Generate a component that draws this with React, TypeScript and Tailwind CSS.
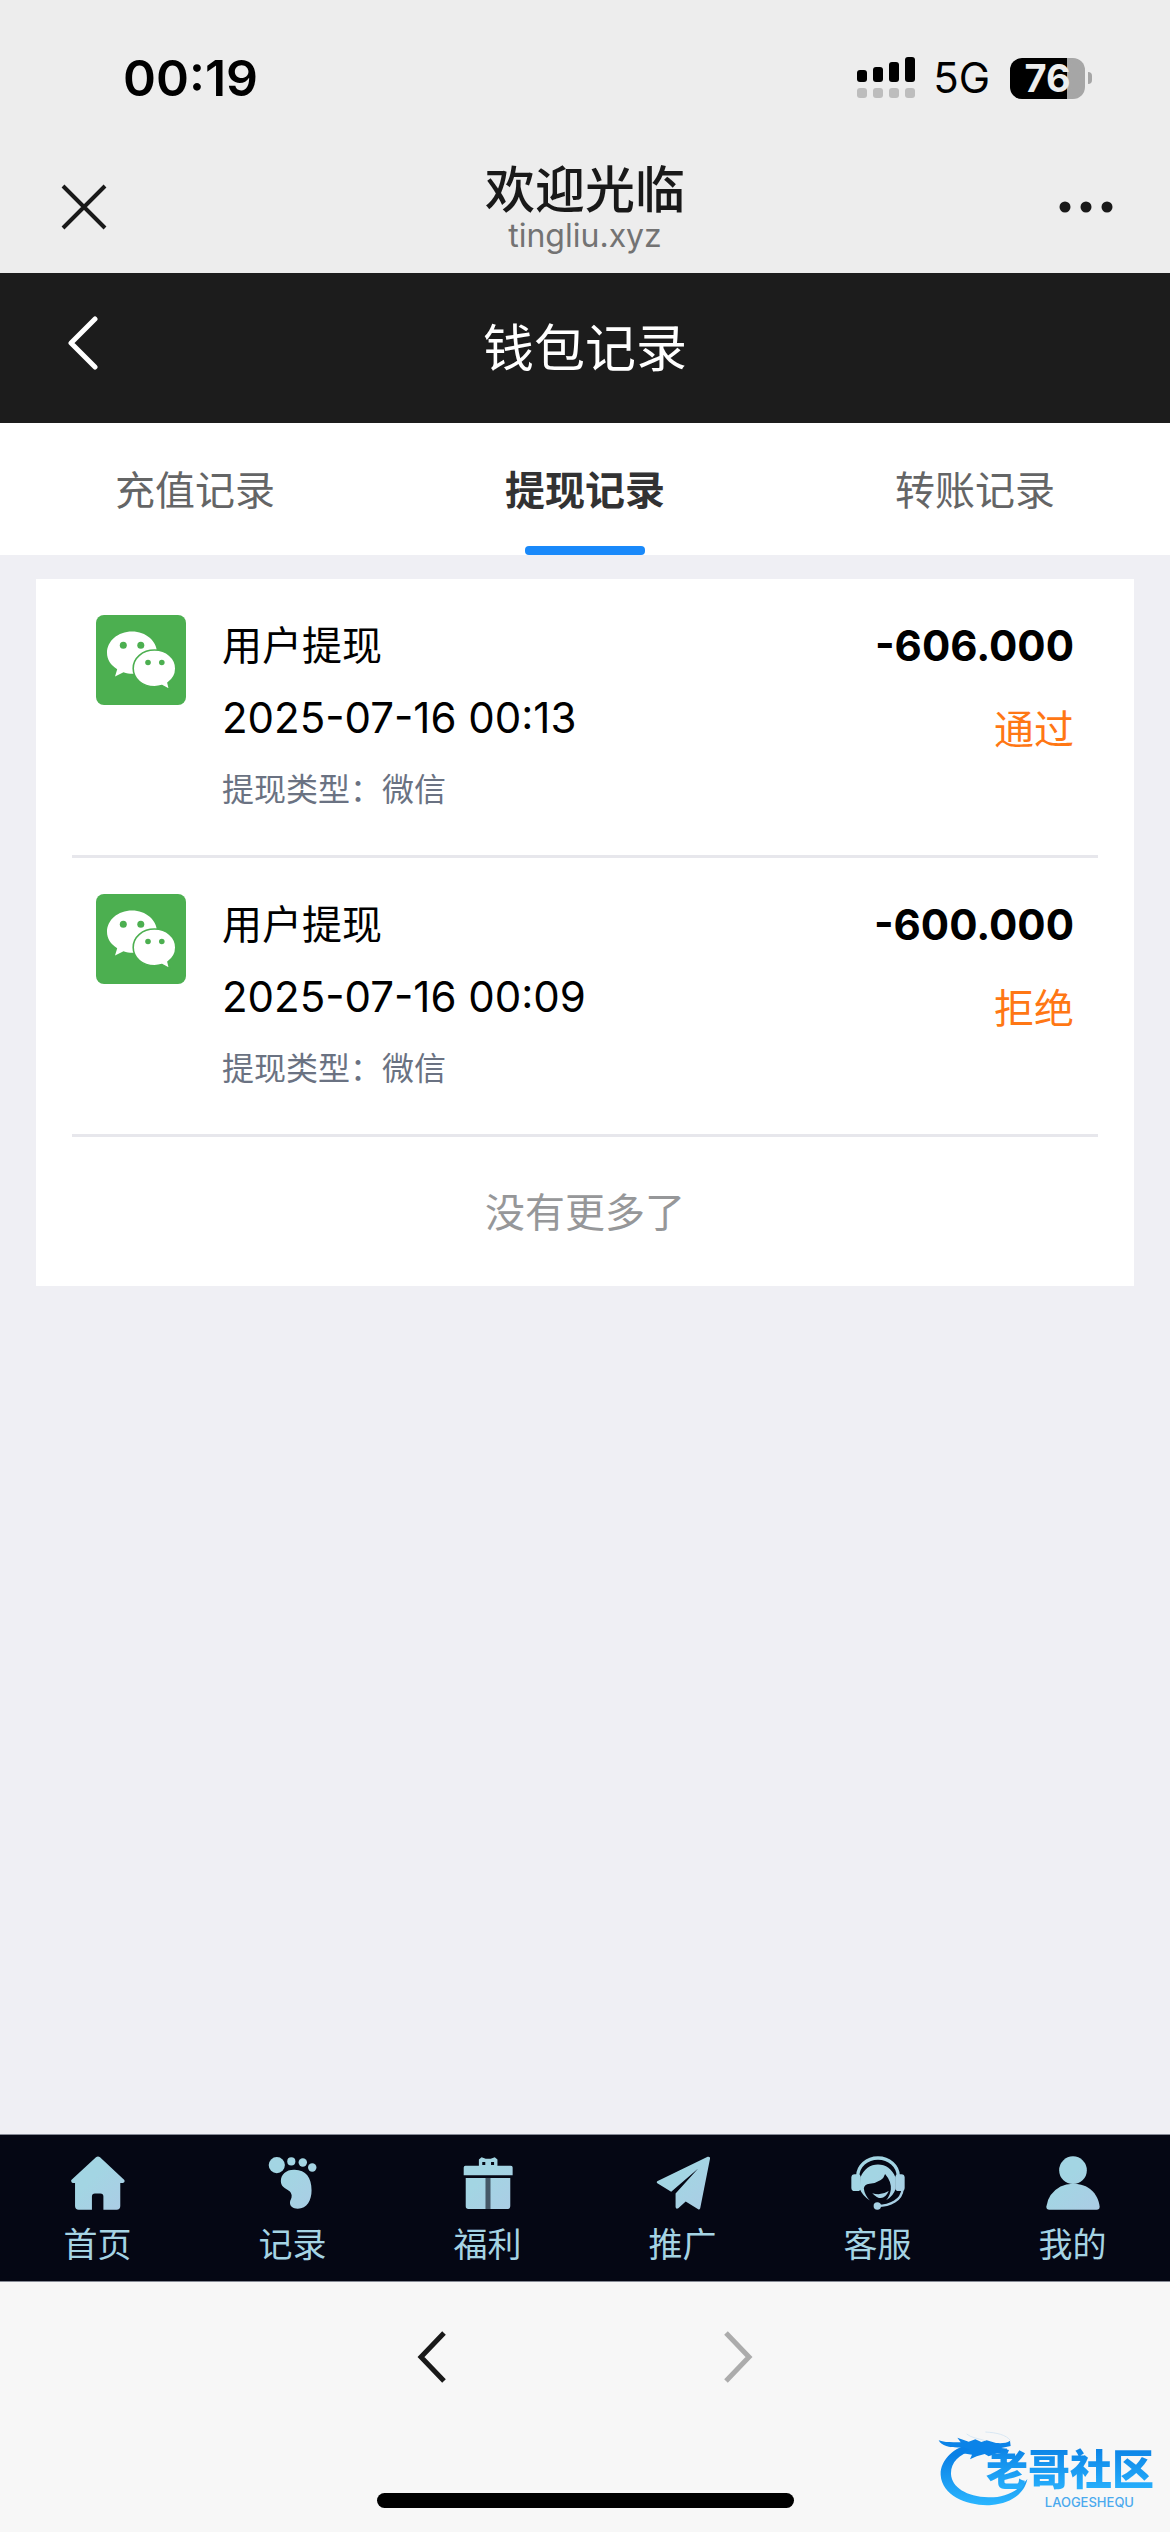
import { useState } from 'react';
import type { ReactNode } from 'react';

interface WithdrawRecord {
  id: number;
  title: string;
  time: string;
  method: string;
  amount: string;
  status: string;
}

const TABS = [
  { key: 'recharge', label: '充值记录' },
  { key: 'withdraw', label: '提现记录' },
  { key: 'transfer', label: '转账记录' },
];

const RECORDS: Record<string, WithdrawRecord[]> = {
  recharge: [],
  withdraw: [
    { id: 1, title: '用户提现', time: '2025-07-16 00:13', method: '微信', amount: '-606.000', status: '通过' },
    { id: 2, title: '用户提现', time: '2025-07-16 00:09', method: '微信', amount: '-600.000', status: '拒绝' },
  ],
  transfer: [],
};

function StatusBar() {
  return (
    <div className="flex h-[156px] items-center justify-between pl-[123px] pr-[78px] text-black">
      <span className="text-[50px] leading-none font-semibold">00:19</span>
      <div className="flex items-center gap-5">
        <div className="flex items-center gap-4">
          <svg className="h-[42px] w-[60px]" viewBox="0 0 60 42" aria-label="信号">
            <rect x="0" y="13" width="10" height="12" rx="3" />
            <rect x="16" y="10" width="10" height="15" rx="3" />
            <rect x="32" y="5" width="10" height="20" rx="3" />
            <rect x="48" y="0" width="10" height="25" rx="3" />
            {[0, 16, 32, 48].map((x) => (
              <rect key={x} x={x} y="31" width="10" height="10" rx="3" fill="#bdbdbd" />
            ))}
          </svg>
          <span className="text-[42px] leading-none">5G</span>
        </div>
        <div className="flex items-center gap-[3px]">
          <div className="flex h-[41px] w-[75px] items-center justify-center rounded-xl bg-linear-to-r from-black from-76% to-[#a6a6a6] to-76% text-[38px] leading-none font-bold text-[#ededed]">
            76
          </div>
          <div className="h-3 w-1 rounded-r-full bg-[#a6a6a6]" />
        </div>
      </div>
    </div>
  );
}

function BrowserBar() {
  return (
    <div className="flex h-[117px] items-start justify-between px-[57px] text-[#191919]">
      <button type="button" aria-label="关闭" className="pt-[26px]">
        <svg className="h-12 w-[54px]" viewBox="0 0 54 48" fill="none" stroke="currentColor" strokeWidth="4">
          <path d="M6 4 48 46M48 4 6 46" />
        </svg>
      </button>
      <div className="flex flex-col items-center">
        <span className="text-[50px] leading-[68px] font-medium">欢迎光临</span>
        <span className="text-[32px] leading-6 text-[#737373]">tingliu.xyz</span>
      </div>
      <button type="button" aria-label="更多" className="pt-[26px]">
        <svg className="h-12 w-[54px]" viewBox="0 0 54 48" fill="currentColor">
          <circle cx="6" cy="25" r="5.500" />
          <circle cx="27" cy="25" r="5.500" />
          <circle cx="48" cy="25" r="5.500" />
        </svg>
      </button>
    </div>
  );
}

function WechatIcon() {
  return (
    <svg className="size-[90px] shrink-0 rounded-lg" viewBox="0 0 90 90" aria-label="微信">
      <rect width="90" height="90" fill="#4caf50" />
      <path fill="#fff" d="M36 16.5C22 16.5 11 26 11 37.8c0 6.600 3.500 12.500 10.200 16.400L19 61.500l8.500-4.300c3 1 6 1.600 9 1.600 14 0 24.500-9.500 24.500-21S50 16.500 36 16.500z" />
      <path fill="#fff" stroke="#4caf50" strokeWidth="1.600" d="M58.500 35C46.500 35 37.200 43 37.200 53.400S46.500 71.800 58.500 71.800c2.800 0 5-.4 7.500-1.200l7.600 4-1.600-6.800c5-3.600 7.800-8.700 7.800-14.400C79.800 43 70.500 35 58.500 35z" />
      <g fill="#4caf50">
        <circle cx="27.300" cy="30.300" r="3.500" />
        <circle cx="44.800" cy="30.300" r="3.500" />
        <circle cx="52" cy="47.500" r="2.800" />
        <circle cx="65.800" cy="47.500" r="2.800" />
      </g>
    </svg>
  );
}

function RecordItem({ record }: { record: WithdrawRecord }) {
  return (
    <li className="flex items-start border-b-[3px] border-[#e7e7ec] px-6 pt-9 pb-[35px] text-black">
      <WechatIcon />
      <div className="ml-9 flex flex-1 flex-col gap-3 pt-px leading-[60px]">
        <div className="text-[40px]">{record.title}</div>
        <div className="text-[42px]">{record.time}</div>
        <div className="text-[32px] text-gray-500">提现类型：{record.method}</div>
      </div>
      <div className="flex flex-col items-end gap-6 pt-px leading-[60px]">
        <div className="text-[42px] font-bold">{record.amount}</div>
        <div className="text-[40px] text-[#ff7714]">{record.status}</div>
      </div>
    </li>
  );
}

// bottom nav icons share one 160x160 grid
const NAV_ITEMS: { label: string; icon: ReactNode }[] = [
  {
    label: '首页',
    icon: (
      <path d="M74 4q6-5 12 0L158 71q3 7-4 9h-8v68q0 11-11 11H96v-39q0-9-9-9H71q-9 0-9 9v39H23q-11 0-11-11V80H5q-6-2-4-9z" />
    ),
  },
  {
    label: '记录',
    icon: (
      <>
        <circle cx="32" cy="27" r="24" />
        <circle cx="75" cy="16" r="12" />
        <circle cx="109" cy="19" r="12.500" />
        <circle cx="137" cy="34" r="12.500" />
        <path d="M85 41C60 40 44 55 44 74c0 26 30 22 32 42 1 10-5 14-5 22 0 12 9 18 23 18 28 0 41-26 41-54 0-38-17-60-50-61z" />
      </>
    ),
  },
  {
    label: '福利',
    icon: (
      <>
        <path fillRule="evenodd" d="M53 29V10l8-6 12 4h15l12-4 8 6v19h40q5 0 5 5v23H8V34q0-5 5-5zM63 18v9h9v-9zM89 18v9h9v-9z" />
        <path d="M14 65h59v92H22q-8 0-8-8zM87 65h59v84q0 8-8 8H87z" />
        <path d="M73 65h14v92H73z" opacity=".4" />
      </>
    ),
  },
  {
    label: '推广',
    icon: (
      <path d="M153 2q8-1 7 6l-29 147q-2 5-6 3L88 135l-22 20q-7 4-8-4v-40l67-74-80 69-41-25q-4-4 1-7z" />
    ),
  },
  {
    label: '客服',
    icon: (
      <>
        <path d="M20 60a60 54 0 0 1 120 0" fill="none" stroke="url(#navFill)" strokeWidth="10" />
        <path d="M28 64C37 38 58 25 80 25s43 13 52 39v34q-7 22-28 33 12-14 14-32 2-24-17-46-6 24-46 29-16 2-17 14 2 18 18 36Q34 118 26 98z" />
        <rect x="1" y="54" width="28" height="50" rx="10" />
        <rect x="131" y="54" width="28" height="50" rx="10" />
        <path d="M63 110q25 9 49-6-18 38-49 6z" />
        <path d="M78 148c40 0 72-18 75-50" fill="none" stroke="url(#navFill)" strokeWidth="7" />
        <circle cx="78" cy="148" r="11" />
      </>
    ),
  },
  {
    label: '我的',
    icon: (
      <>
        <circle cx="80" cy="42" r="41" />
        <path d="M80 82c46 0 74 28 79 68q0 9-9 9H10q-9 0-9-9 5-40 42-60 16-8 37-8z" />
      </>
    ),
  },
];

function BottomNav() {
  return (
    <nav className="grid grid-cols-6 border-y border-[#868a95] bg-[#050714] pt-[21px] pb-3.5 text-[#a5d4e4]">
      {NAV_ITEMS.map((item) => (
        <a key={item.label} href="#" className="flex flex-col items-center gap-[13px]">
          <svg className="size-[54px]" viewBox="0 0 160 160" fill="url(#navFill)" aria-hidden="true">
            <defs>
              <linearGradient id="navFill" gradientUnits="userSpaceOnUse" x1="0" y1="0" x2="160" y2="160">
                <stop offset="0.400" stopColor="#a3d5e3" />
                <stop offset="1" stopColor="#abcce5" />
              </linearGradient>
            </defs>
            {item.icon}
          </svg>
          <span className="text-[34px] leading-[44px]">{item.label}</span>
        </a>
      ))}
    </nav>
  );
}

function CommunityLogo() {
  return (
    <div className="absolute right-4 bottom-6 flex items-end">
      <svg className="h-[78px] w-[92px]" viewBox="94 90 276 234" aria-hidden="true">
        <defs>
          <linearGradient id="dragon" x1="0" y1="0" x2="0" y2="1">
            <stop offset="0.200" stopColor="#0a80e6" />
            <stop offset="1" stopColor="#2bb6ff" />
          </linearGradient>
        </defs>
        <path fill="url(#dragon)" d="M200 128C136 142 100 184 102 225c4 65 88 95 153 90 55-5 98-32 107-78-32 42-72 56-117 55-65-2-110-30-112-70-1-34 22-58 67-72z" />
        <path fill="#0b83e8" d="M96 121c22 8 44 5 66 6l-10-14 34 12 20-7 18 8 16-5 28 8c16 1 32 1 42-7l2 16-28 6 23 6-6 14-30-4-25 9-12-7-24 7-20 9 6-14-28-4 20-12-20-6c-26 2-62 0-72-21z" />
        <path fill="none" stroke="#c9dff2" strokeWidth="2" d="M180 102c14 12 38 14 56 20M236 96c34 2 62 8 76 26" />
      </svg>
      <div className="-ml-11 flex flex-col items-end">
        <span className="bg-linear-to-b from-[#0a7fe4] to-[#2bb6ff] bg-clip-text text-[42px] leading-[52px] font-black text-transparent">
          老哥社区
        </span>
        <span className="pr-5 text-[13px] leading-3 font-medium text-[#4aa9ee]">LAOGESHEQU</span>
      </div>
    </div>
  );
}

export default function App() {
  const [active, setActive] = useState('withdraw');
  const records = RECORDS[active];

  return (
    <div className="flex min-h-screen flex-col bg-[#efeff4] font-['Inter','Noto_Sans_CJK_SC',sans-serif]">
      <header className="bg-[#ededed]">
        <StatusBar />
        <BrowserBar />
      </header>

      <div className="grid h-[150px] grid-cols-[1fr_auto_1fr] items-center bg-[#1c1c1c] px-[60px] text-white">
        <button type="button" aria-label="返回" className="justify-self-start pb-2.5">
          <svg className="h-[54px] w-[42px]" viewBox="0 0 42 54" fill="none" stroke="currentColor" strokeWidth="5" strokeLinecap="round" strokeLinejoin="round">
            <path d="M35 3 11 27l24 24" />
          </svg>
        </button>
        <h1 className="text-[51px] leading-none">钱包记录</h1>
      </div>

      <div role="tablist" className="grid h-[132px] grid-cols-3 bg-white">
        {TABS.map((tab) => (
          <button
            key={tab.key}
            type="button"
            role="tab"
            aria-selected={tab.key === active}
            onClick={() => setActive(tab.key)}
            className={`relative pt-1 text-[40px] ${
              tab.key === active ? 'font-bold text-[#323233]' : 'text-[#646566]'
            }`}
          >
            {tab.label}
            {tab.key === active && (
              <span className="absolute bottom-0 left-1/2 h-[9px] w-[120px] -translate-x-1/2 rounded bg-[#1989fa]" />
            )}
          </button>
        ))}
      </div>

      <main className="flex-1 px-9 pt-6">
        <div className="bg-white px-9">
          <ul>
            {records.map((record) => (
              <RecordItem key={record.id} record={record} />
            ))}
          </ul>
          <p className="pt-[46px] pb-[43px] text-center text-[40px] leading-[60px] text-[#969799]">没有更多了</p>
        </div>
      </main>

      <BottomNav />

      <footer className="relative flex flex-col items-center bg-[#f7f7f7] pt-12 pb-6">
        <div className="flex gap-[276px]">
          <button type="button" aria-label="后退" className="text-[#191919]">
            <svg className="h-[54px] w-[30px]" viewBox="0 0 30 54" fill="none" stroke="currentColor" strokeWidth="5">
              <path d="M27 3 4 27l23 24" />
            </svg>
          </button>
          <button type="button" aria-label="前进" disabled className="text-[#acacac]">
            <svg className="h-[54px] w-[30px]" viewBox="0 0 30 54" fill="none" stroke="currentColor" strokeWidth="5">
              <path d="M3 3l23 24L3 51" />
            </svg>
          </button>
        </div>
        <div className="mt-[109px] h-[15px] w-[417px] rounded-full bg-black" />
        <CommunityLogo />
      </footer>
    </div>
  );
}
